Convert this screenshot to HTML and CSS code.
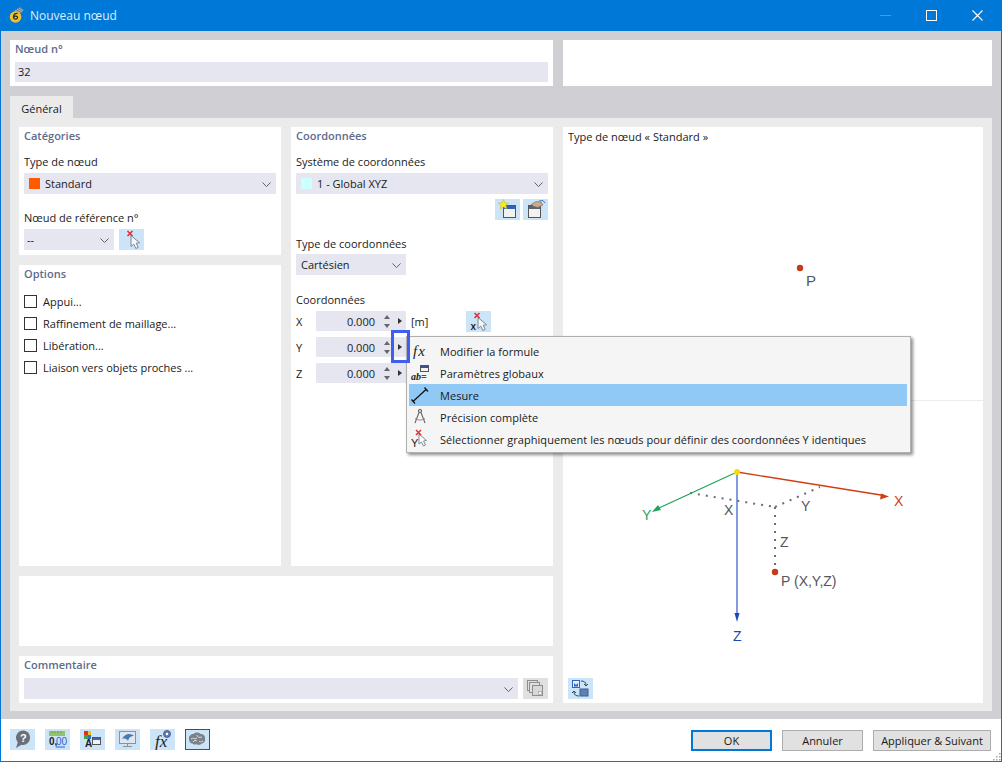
FILE: index.html
```html
<!DOCTYPE html>
<html lang="fr">
<head>
<meta charset="utf-8">
<title>Nouveau nœud</title>
<link rel="stylesheet" href="styles.css">
</head>
<body>
<svg class="defs" width="0" height="0">
  <defs>
    <symbol id="pick" viewBox="0 0 25 21">
      <path d="M12 6.500l0 11 2.800-2.300 2 4.300 2.400-1.100-2-4.200 3.400-.4z" fill="#f4f6f8" stroke="#7d8794" stroke-width="1"/>
      <path d="M8.500 2l5 5M13.500 2l-5 5" stroke="#e0303a" stroke-width="1.600"/>
    </symbol>
    <symbol id="chev" viewBox="0 0 11 6">
      <path d="M.5.500l5 5 5-5" fill="none" stroke="#555" stroke-width="1.100"/>
    </symbol>
  </defs>
</svg>
<div class="window">
  <header class="titlebar">
    <svg class="logo" width="16" height="18" viewBox="0 0 16 18">
      <path d="M5 5l6-4 4 3-5 5z" fill="#7a8290"/>
      <path d="M6 4l5 3M8 3l5 3M10 2l4 3" stroke="#b7bcc6" stroke-width=".7"/>
      <circle cx="6.500" cy="11" r="5.800" fill="#eec22f"/>
      <path d="M8.500 7.500c-2.500-.5-4 1-4 3.800 0 2.200 4 2.500 4 .2 0-1.800-2.800-1.800-4-.5" fill="none" stroke="#2b2b20" stroke-width="1.300"/>
    </svg>
    <span class="title-text">Nouveau nœud</span>
    <div class="win-controls">
      <svg class="win-min" width="11" height="1" viewBox="0 0 11 1"><path d="M0 .5h11" stroke="#3f9be6"/></svg>
      <svg class="win-max" width="11" height="11" viewBox="0 0 11 11"><rect x=".5" y=".5" width="10" height="10" fill="none" stroke="#fff"/></svg>
      <svg class="win-close" width="11" height="11" viewBox="0 0 11 11"><path d="M.5.500l10 10M10.500.500l-10 10" stroke="#fff" stroke-width="1.100"/></svg>
    </div>
  </header>

  <main class="body">
    <div class="top-row">
      <section class="top-panel">
        <div class="top-label">Nœud n°</div>
        <div class="field field-number">32</div>
      </section>
      <section class="top-panel"></section>
    </div>

    <div class="tabs"><div class="tab">Général</div></div>

    <div class="tab-content">
      <div class="left-area">
        <div class="columns">
          <div class="col">
            <section class="panel panel-cat">
              <h3 class="panel-title">Catégories</h3>
              <div class="label label-first">Type de nœud</div>
              <div class="combo">
                <span class="swatch swatch-orange"></span><span>Standard</span>
                <svg class="chev"><use href="#chev"/></svg>
              </div>
              <div class="label label-next">Nœud de référence n°</div>
              <div class="combo-row">
                <div class="combo combo-ref">
                  <span>--</span>
                  <svg class="chev"><use href="#chev"/></svg>
                </div>
                <div class="icon-btn"><svg width="25" height="21"><use href="#pick"/></svg></div>
              </div>
            </section>
            <section class="panel panel-opt">
              <h3 class="panel-title">Options</h3>
              <div class="checks">
                <label class="check"><span class="box"></span>Appui...</label>
                <label class="check"><span class="box"></span>Raffinement de maillage...</label>
                <label class="check"><span class="box"></span>Libération...</label>
                <label class="check"><span class="box"></span>Liaison vers objets proches ...</label>
              </div>
            </section>
          </div>

          <section class="panel panel-coord">
            <h3 class="panel-title">Coordonnées</h3>
            <div class="label label-first">Système de coordonnées</div>
            <div class="combo">
              <span class="swatch swatch-cyan"></span><span>1 - Global XYZ</span>
              <svg class="chev"><use href="#chev"/></svg>
            </div>
            <div class="btn-row">
              <div class="icon-btn">
                <svg width="25" height="21" viewBox="0 0 25 21">
                  <rect x="8.500" y="6.500" width="12" height="12" fill="#f2f2f2" stroke="#555"/>
                  <rect x="9" y="7" width="11" height="3" fill="#2f62b8"/>
                  <path d="M8.500 .5l1.500 3.300 3.600.3-2.700 2.300.9 3.500-3.300-1.900-3.300 1.900.9-3.500-2.700-2.300 3.600-.3z" fill="#f6ec1e" stroke="#c4b21c" stroke-width=".5"/>
                </svg>
              </div>
              <div class="icon-btn">
                <svg width="25" height="21" viewBox="0 0 25 21">
                  <rect x="5.500" y="6.500" width="12" height="12" fill="#f2f2f2" stroke="#555"/>
                  <rect x="6" y="7" width="11" height="3" fill="#5a6470"/>
                  <path d="M8 5.500l5-3 5 .5 2 3-5 2.500-4-1z" fill="#c9a98f" stroke="#7d6a5a" stroke-width=".6"/>
                  <path d="M16 2l4-.5 2 2.500" fill="none" stroke="#3b78c6"/>
                </svg>
              </div>
            </div>
            <div class="label label-type">Type de coordonnées</div>
            <div class="combo combo-type">
              <span>Cartésien</span>
              <svg class="chev"><use href="#chev"/></svg>
            </div>
            <div class="label label-coords">Coordonnées</div>
            <div class="coord-row">
              <span class="axis">X</span>
              <div class="spin-field">
                <span class="spin-value">0.000</span>
                <span class="spin"><i class="up"></i><i class="down"></i></span>
                <i class="play"></i>
              </div>
              <span class="unit">[m]</span>
              <div class="icon-btn icon-btn-x"><span class="x-letter">x</span><svg width="25" height="21"><use href="#pick"/></svg></div>
            </div>
            <div class="coord-row">
              <span class="axis">Y</span>
              <div class="spin-field">
                <span class="spin-value">0.000</span>
                <span class="spin"><i class="up"></i><i class="down"></i></span>
                <i class="play"></i>
              </div>
            </div>
            <div class="coord-row">
              <span class="axis">Z</span>
              <div class="spin-field">
                <span class="spin-value">0.000</span>
                <span class="spin"><i class="up"></i><i class="down"></i></span>
                <i class="play"></i>
              </div>
            </div>
            <div class="focus-box"></div>
          </section>
        </div>

        <section class="panel panel-msg"></section>

        <section class="panel panel-comment">
          <h3 class="panel-title">Commentaire</h3>
          <div class="combo-row comment-row">
            <div class="combo combo-comment">
              <svg class="chev"><use href="#chev"/></svg>
            </div>
            <div class="icon-btn icon-btn-off">
              <svg width="25" height="21" viewBox="0 0 25 21">
                <rect x="4.500" y="2.500" width="10" height="10" fill="#e0e0e0" stroke="#8e8e8e"/>
                <rect x="6.500" y="4.500" width="10" height="10" fill="#e0e0e0" stroke="#8e8e8e"/>
                <rect x="9.500" y="7.500" width="10" height="10" fill="#d8d8d8" stroke="#8e8e8e"/>
                <rect x="15.500" y="13.500" width="3" height="3" fill="#f5f5f5" stroke="#9a9a9a" stroke-width=".6"/>
              </svg>
            </div>
          </div>
        </section>
      </div>

      <section class="preview">
        <div class="preview-title">Type de nœud « Standard »</div>
        <svg class="preview-art" width="420" height="576" viewBox="0 0 420 576">
          <line x1="0" y1="273.500" x2="420" y2="273.500" stroke="#ececec"/>
          <circle cx="237" cy="141" r="3.200" fill="#c8391a"/>
          <text x="243" y="159" class="art-p">P</text>

          <path d="M127 366l85 14M212 380l45-20M212 380v65" fill="none" stroke="#6c6c78" stroke-width="2" stroke-dasharray="2 6"/>
          <line x1="174" y1="345" x2="321" y2="368.500" stroke="#cf3f12" stroke-width="1.300"/>
          <path d="M326 369.500l-9 3 1-6z" fill="#cf3f12"/>
          <line x1="174" y1="345" x2="96" y2="381" stroke="#1ea55a" stroke-width="1.300"/>
          <path d="M89 385l6-7 3 5z" fill="#1ea55a"/>
          <line x1="174" y1="345" x2="174" y2="488" stroke="#3d66d0" stroke-width="1.300"/>
          <path d="M174 495l-2.500-9h5z" fill="#1c48b8"/>
          <circle cx="174" cy="345" r="3" fill="#f8d90f"/>
          <circle cx="212" cy="445" r="3.200" fill="#c8391a"/>

          <text x="331" y="379" class="art-t art-x">X</text>
          <text x="79" y="393" class="art-t art-y">Y</text>
          <text x="170" y="514" class="art-t art-z">Z</text>
          <text x="161" y="388" class="art-t art-g">X</text>
          <text x="238" y="384" class="art-t art-g">Y</text>
          <text x="217" y="420" class="art-t art-g">Z</text>
          <text x="218" y="459" class="art-t art-g">P (X,Y,Z)</text>
        </svg>
        <div class="icon-btn preview-btn">
          <svg width="25" height="21" viewBox="0 0 25 21">
            <rect x="4.500" y="2.500" width="7" height="7" fill="#e8eefb" stroke="#2f62c8"/>
            <path d="M6 8.500V5l2 2 2-2v3.500z" fill="#2f62c8"/>
            <rect x="12" y="11" width="8" height="7" fill="#5a82b8" stroke="#3c5c8c"/>
            <path d="M13 3c3 0 5 1 5 4M16 6l2 2 2-2M11 18c-3 0-5-1-5-4M4 15l2-2 2 2" fill="none" stroke="#34485e"/>
          </svg>
        </div>
      </section>
    </div>
  </main>

  <footer class="footer">
    <div class="tools">
      <div class="icon-btn tool">
        <svg width="25" height="21" viewBox="0 0 25 21">
          <path d="M20 8.500a7 7 0 1 0-12.200 4.700L6 19l5.500-3.200A7 7 0 0 0 20 8.500z" fill="#6a6f78"/>
          <text x="10" y="13" class="tool-q">?</text>
        </svg>
      </div>
      <div class="icon-btn tool">
        <svg width="25" height="21" viewBox="0 0 25 21">
          <rect x="4" y="2" width="16" height="5" fill="#8fc46c"/>
          <path d="M7 2v2M10 2v2M13 2v2M16 2v2" stroke="#5f9444" stroke-width=".7"/>
          <text x="4" y="16" class="tool-num">0,</text>
          <text x="11" y="16" class="tool-num tool-num-blue">00</text>
          <path d="M11 18h9" stroke="#2f62c8"/>
        </svg>
      </div>
      <div class="icon-btn tool">
        <svg width="25" height="21" viewBox="0 0 25 21">
          <rect x="4" y="2" width="4" height="4" fill="#e0302a"/>
          <rect x="8" y="2" width="3" height="4" fill="#e8c42a"/>
          <rect x="4" y="6" width="4" height="4" fill="#3aa648"/>
          <rect x="8" y="6" width="3" height="4" fill="#3a6ac8"/>
          <text x="5" y="18" class="tool-a">A</text>
          <rect x="12.500" y="8.500" width="8" height="7" fill="#f2f2f2" stroke="#555"/>
          <rect x="13" y="9" width="7" height="2" fill="#3a6ac8"/>
        </svg>
      </div>
      <div class="icon-btn tool">
        <svg width="25" height="21" viewBox="0 0 25 21">
          <rect x="4.500" y="2.500" width="16" height="12" fill="#dfe6ee" stroke="#8a929c"/>
          <path d="M7 10c3-6 9-6 12-3-3 0-5 1-6 5-1-2-3-3-6-2z" fill="#4a78b0"/>
          <path d="M12.500 14.500v3M8 17.500h9" stroke="#8a929c"/>
        </svg>
      </div>
      <div class="icon-btn tool">
        <svg width="25" height="21" viewBox="0 0 25 21">
          <text x="5" y="18" class="tool-fx">fx</text>
          <circle cx="17" cy="5" r="3.500" fill="#6a7ab8" stroke="#34406e" stroke-width=".7"/>
          <circle cx="17" cy="5" r="1.200" fill="#fff"/>
        </svg>
      </div>
      <div class="icon-btn tool tool-active">
        <svg width="23" height="19" viewBox="0 0 23 19">
          <path d="M3 9c-.5-3 2-5 4.500-5 1.500-2 5.500-2 7 0 3 0 5 2 4.500 5 .5 2-1 4.500-3.500 4.500-1 2-4 1.500-5 .5-1 1-3 .5-4-.5-2 0-3.500-2-3.500-4.500z" fill="#7b8089"/>
          <path d="M5 9c2-2 3 1 6-1M11 5c0 2 2 3 5 2M7 12c1-2 3-2 4-1M13 11c1 1 2 1 4 0" fill="none" stroke="#d4dbe3" stroke-width="1"/>
        </svg>
      </div>
    </div>
    <div class="actions">
      <button class="btn btn-ok">OK</button>
      <button class="btn">Annuler</button>
      <button class="btn btn-apply">Appliquer &amp; Suivant</button>
    </div>
    <svg class="grip" width="9" height="9" viewBox="0 0 9 9"><path d="M7 1h1.500v1.500H7zM4 4h1.500v1.500H4zM7 4h1.500v1.500H7zM1 7h1.500v1.500H1zM4 7h1.500v1.500H4zM7 7h1.500v1.500H7z" fill="#a8a8a8"/></svg>
  </footer>

  <nav class="menu">
    <div class="menu-item">
      <span class="menu-icon"><svg width="20" height="20" viewBox="0 0 20 20"><text x="3" y="15" class="m-fx">fx</text></svg></span>
      <span>Modifier la formule</span>
    </div>
    <div class="menu-item">
      <span class="menu-icon"><svg width="20" height="20" viewBox="0 0 20 20"><rect x="10.500" y="2.500" width="8" height="6" fill="#f4f4f4" stroke="#555"/><rect x="11" y="3" width="7" height="2" fill="#34509c"/><text x="1" y="17" class="m-ab">ab=</text></svg></span>
      <span>Paramètres globaux</span>
    </div>
    <div class="menu-item menu-item-on">
      <span class="menu-icon"><svg width="20" height="20" viewBox="0 0 20 20"><path d="M3 16.500L16 4.500" stroke="#111" stroke-width="1.300"/><path d="M1.500 14.500l3.500 4M14.500 2.500l3.500 4" stroke="#111" stroke-width="1.200"/></svg></span>
      <span>Mesure</span>
    </div>
    <div class="menu-item">
      <span class="menu-icon"><svg width="20" height="20" viewBox="0 0 20 20"><circle cx="10" cy="4" r="1.700" fill="#c8ccd2" stroke="#666"/><path d="M9 5.500L5 16M11 5.500L15 16" fill="none" stroke="#666" stroke-width="1.100"/><path d="M5 11.500c3 2 7 2 10 0" fill="none" stroke="#888"/></svg></span>
      <span>Précision complète</span>
    </div>
    <div class="menu-item">
      <span class="menu-icon"><svg width="20" height="20" viewBox="0 0 20 20"><path d="M9 5l0 10 2.500-2 2 4 2-1-2-4 3-.5z" fill="#fff" stroke="#7d8794"/><path d="M6 1l5 5M11 1L6 6" stroke="#e0303a" stroke-width="1.500"/><text x="1" y="18" class="m-y">Y</text></svg></span>
      <span>Sélectionner graphiquement les nœuds pour définir des coordonnées Y identiques</span>
    </div>
  </nav>
</div>
</body>
</html>
```

FILE: styles.css
```css
* { box-sizing: border-box; }
html, body { margin: 0; padding: 0; }
body {
  width: 1002px;
  height: 762px;
  overflow: hidden;
  font-family: "Open Sans", "Noto Sans", sans-serif;
  font-size: 11px;
  color: #1a1a1a;
  background: #fff;
}
.defs { position: absolute; }
.window {
  position: relative;
  width: 1002px;
  height: 762px;
  border: 1px solid #0078d7;
  display: flex;
  flex-direction: column;
}
.titlebar {
  height: 30px;
  background: #0078d7;
  display: flex;
  align-items: center;
  color: #fff;
  padding: 0 0 2px 8px;
}
.logo { margin-right: 5px; }
.title-text { font-size: 12px; color: #dcedfb; }
.win-controls { margin-left: auto; display: flex; align-items: center; }
.win-min { margin-right: 35px; }
.win-max { margin-right: 35px; }
.win-close { margin-right: 18px; }

.body {
  height: 688px;
  background: #d0cfd4;
  padding: 9px 9px 8px;
  display: flex;
  flex-direction: column;
}
.top-row { display: flex; gap: 10px; height: 46px; }
.top-panel { background: #fff; flex: 0 0 429px; padding: 0 5px; }
.top-panel:first-child { flex: 0 0 543px; }
.top-label { color: #5d6b8c; font-weight: 600; height: 22px; line-height: 18px; }
.field { background: #e6e6f0; height: 20px; line-height: 20px; padding-left: 3px; }

.tabs { margin-top: 10px; height: 22px; display: flex; }
.tab {
  width: 63px;
  background: #ebebeb;
  text-align: center;
  line-height: 26px;
}
.tab-content {
  height: 593px;
  background: #ebebeb;
  padding: 9px 9px 8px;
  display: flex;
  gap: 10px;
}
.left-area { width: 534px; display: flex; flex-direction: column; gap: 10px; }
.columns { display: flex; gap: 10px; height: 439px; }
.col { width: 262px; display: flex; flex-direction: column; gap: 10px; }
.panel { background: #fff; padding: 0 5px; position: relative; }
.panel-title {
  margin: 0;
  font-size: 11px;
  font-weight: 600;
  color: #5d6b8c;
  height: 18px;
  line-height: 18px;
}
.panel-cat { height: 128px; }
.panel-opt { flex: 1; }
.panel-coord { width: 262px; }
.panel-msg { height: 70px; }
.panel-comment { height: 47px; padding-top: 0; }
.comment-row { margin-top: 4px; }

.label { height: 15px; line-height: 15px; }
.label-first { margin-top: 9px; margin-bottom: 4px; }
.label-next { margin-top: 16px; margin-bottom: 4px; }
.label-type { margin-top: 16px; margin-bottom: 3px; }
.label-coords { margin-top: 17px; margin-bottom: 4px; }

.combo {
  background: #e6e6f0;
  height: 21px;
  display: flex;
  align-items: center;
  padding-left: 5px;
  position: relative;
}
.chev { position: absolute; right: 5px; top: 9px; width: 9px; height: 5px; }
.swatch { width: 11px; height: 11px; margin-right: 5px; }
.swatch-orange { background: #ff5a00; }
.swatch-cyan { background: #ccffff; }
.combo-row { display: flex; gap: 5px; }
.combo-ref { width: 90px; padding-left: 3px; }
.combo-type { width: 110px; }
.combo-comment { width: 494px; }
.icon-btn {
  width: 25px;
  height: 21px;
  background: #cce4f7;
  flex: none;
  position: relative;
}
.icon-btn svg { display: block; }
.icon-btn-off { background: #e0e0e0; }
.btn-row { display: flex; justify-content: flex-end; gap: 3px; margin-top: 5px; }

.checks { margin-top: 12px; display: flex; flex-direction: column; gap: 9px; }
.check { display: flex; align-items: center; height: 13px; }
.box {
  width: 13px;
  height: 13px;
  border: 1px solid #333;
  background: #fff;
  margin-right: 6px;
}

.coord-row { display: flex; align-items: center; height: 20px; margin-bottom: 6px; position: relative; }
.axis { width: 20px; }
.spin-field {
  width: 90px;
  height: 20px;
  background: #e6e6f0;
  position: relative;
  display: flex;
  align-items: center;
}
.spin-value { width: 59px; text-align: right; }
.spin { position: absolute; left: 68px; top: 4px; width: 7px; height: 13px; }
.spin i { position: absolute; left: 0; width: 0; height: 0; border-left: 3.500px solid transparent; border-right: 3.500px solid transparent; }
.spin .up { top: 0; border-bottom: 4px solid #666; }
.spin .down { bottom: 0; border-top: 4px solid #666; }
.play {
  position: absolute;
  left: 82px;
  top: 7px;
  width: 0;
  height: 0;
  border-top: 3.500px solid transparent;
  border-bottom: 3.500px solid transparent;
  border-left: 4px solid #333;
}
.unit { margin-left: 5px; }
.icon-btn-x { margin-left: 38px; }
.x-letter { position: absolute; left: 4px; top: 9px; line-height: 12px; font-size: 10px; font-weight: 600; }
.focus-box {
  position: absolute;
  z-index: 2;
  left: 100px;
  top: 203px;
  width: 19px;
  height: 33px;
  border: 3px solid #3f5ef0;
}

.preview { width: 420px; height: 576px; background: #fff; position: relative; }
.preview-title { padding: 2px 5px 0; line-height: 15px; position: relative; }
.preview-art { position: absolute; left: 0; top: 0; }
.preview-btn { position: absolute; left: 5px; top: 551px; }
.art-p { font: 15px "Liberation Sans", sans-serif; fill: #55555f; }
.art-t { font: 14px "Liberation Sans", sans-serif; }
.art-x { fill: #cf3f12; }
.art-y { fill: #1ea55a; }
.art-z { fill: #1c48b8; }
.art-g { fill: #55555f; }

.footer {
  height: 42px;
  background: #fff;
  position: relative;
  display: flex;
  align-items: flex-start;
  padding: 10px 10px 0 9px;
  justify-content: space-between;
}
.tools { display: flex; gap: 10px; }
.tool-active { border: 1px solid #1d5a94; }
.actions { display: flex; gap: 10px; padding-top: 1px; }
.btn {
  width: 81px;
  height: 21px;
  background: #e1e1e1;
  border: 1px solid #adadad;
  font: inherit;
  color: #1a1a1a;
  padding: 0;
}
.btn-ok { border: 2px solid #0078d7; }
.btn-apply { width: 118px; }
.grip { position: absolute; right: 0; bottom: 0; }
.tool-q { font: bold 11px "Liberation Sans", sans-serif; fill: #fff; }
.tool-num { font: bold 10px "Liberation Sans", sans-serif; fill: #222; }
.tool-num-blue { fill: #2f62c8; font-weight: normal; }
.tool-a { font: bold 10px "Liberation Sans", sans-serif; fill: #222; }
.tool-fx { font: italic 17px "Liberation Serif", serif; fill: #222; }

.menu {
  position: absolute;
  left: 405px;
  top: 335px;
  width: 505px;
  height: 117px;
  background: #f5f5f5;
  border: 1px solid #b0b0b0;
  box-shadow: 2px 2px 3px rgba(0, 0, 0, .45);
  padding: 3px 3px 0 2px;
  letter-spacing: .04px;
}
.menu-item { display: flex; align-items: center; height: 22px; }
.menu-item-on { background: #90c8f6; }
.menu-icon { width: 31px; height: 20px; padding-left: 1px; flex: none; }
.menu-icon svg { display: block; }
.m-fx { font: italic 15px "Liberation Serif", serif; fill: #222; letter-spacing: 1px; }
.m-ab { font: italic bold 10px "Liberation Serif", serif; fill: #222; }
.m-y { font: 11px "Liberation Sans", sans-serif; fill: #222; }
```
